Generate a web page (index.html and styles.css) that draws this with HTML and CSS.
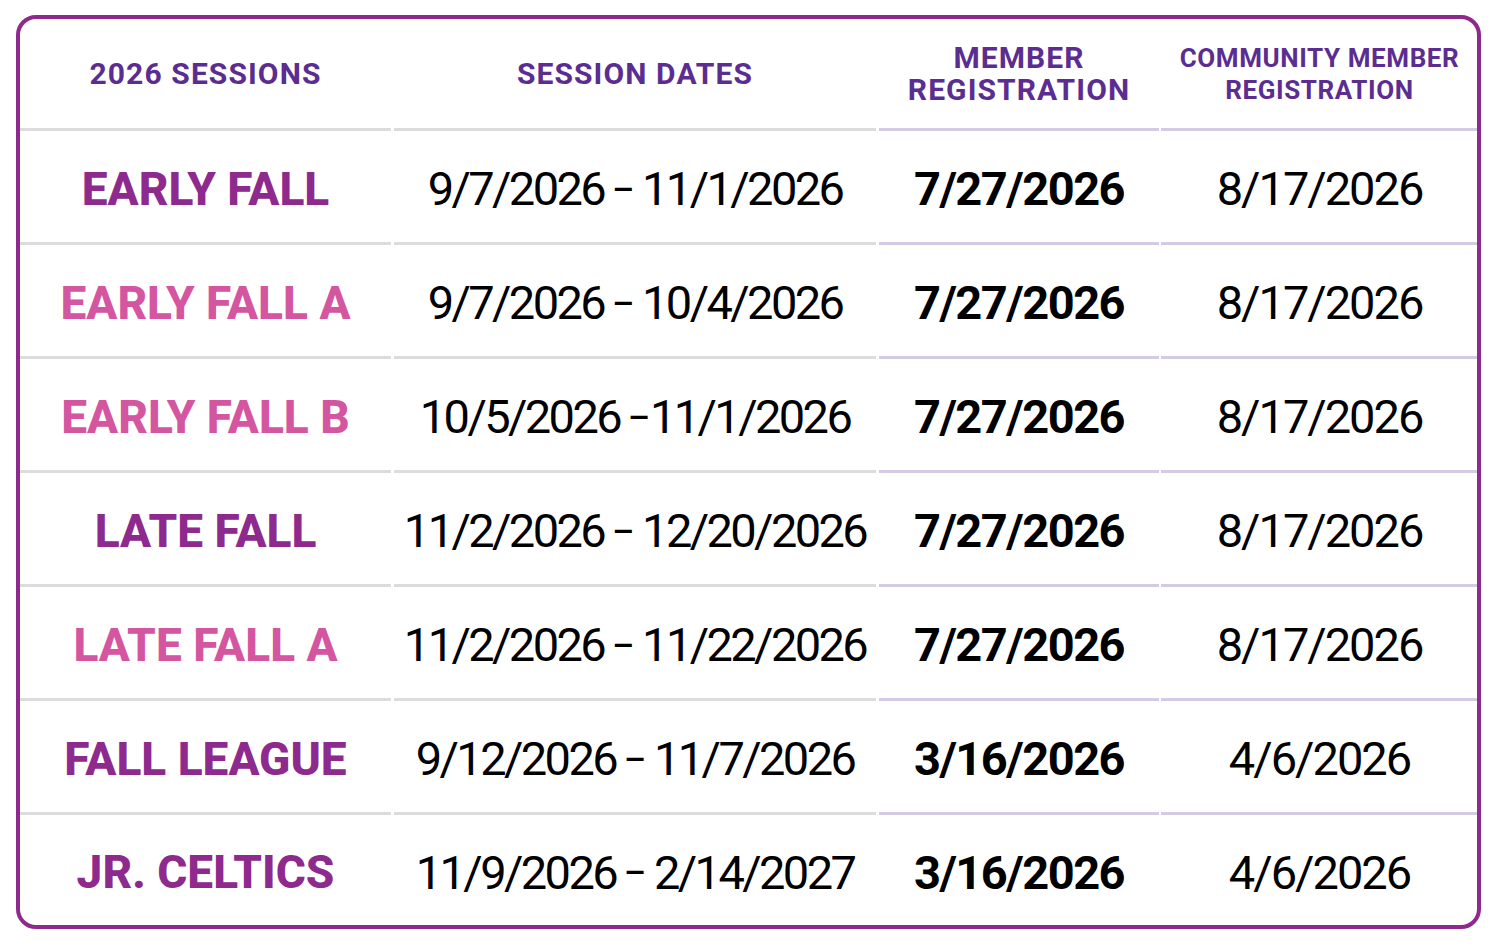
FILE: index.html
```html
<!DOCTYPE html>
<html lang="en">
<head>
<meta charset="utf-8">
<title>2026 Sessions</title>
<link rel="stylesheet" href="styles.css">
</head>
<body>
<div class="frame">
  <div class="table">
    <div class="cell head c1"><span>2026 SESSIONS</span></div>
    <div class="cell head c2"><span>SESSION DATES</span></div>
    <div class="cell head c3"><span>MEMBER<br>REGISTRATION</span></div>
    <div class="cell head c4 small"><span>COMMUNITY MEMBER<br>REGISTRATION</span></div>

    <div class="cell c1 name purple">EARLY FALL</div>
    <div class="cell c2 dates">9/7/2026 <span class="dash">–</span> 11/1/2026</div>
    <div class="cell c3 member">7/27/2026</div>
    <div class="cell c4 community">8/17/2026</div>

    <div class="cell c1 name pink">EARLY FALL A</div>
    <div class="cell c2 dates">9/7/2026 <span class="dash">–</span> 10/4/2026</div>
    <div class="cell c3 member">7/27/2026</div>
    <div class="cell c4 community">8/17/2026</div>

    <div class="cell c1 name pink">EARLY FALL B</div>
    <div class="cell c2 dates">10/5/2026 <span class="dash">–</span>11/1/2026</div>
    <div class="cell c3 member">7/27/2026</div>
    <div class="cell c4 community">8/17/2026</div>

    <div class="cell c1 name purple">LATE FALL</div>
    <div class="cell c2 dates">11/2/2026 <span class="dash">–</span> 12/20/2026</div>
    <div class="cell c3 member">7/27/2026</div>
    <div class="cell c4 community">8/17/2026</div>

    <div class="cell c1 name pink">LATE FALL A</div>
    <div class="cell c2 dates">11/2/2026 <span class="dash">–</span> 11/22/2026</div>
    <div class="cell c3 member">7/27/2026</div>
    <div class="cell c4 community">8/17/2026</div>

    <div class="cell c1 name purple">FALL LEAGUE</div>
    <div class="cell c2 dates">9/12/2026 <span class="dash">–</span> 11/7/2026</div>
    <div class="cell c3 member">3/16/2026</div>
    <div class="cell c4 community">4/6/2026</div>

    <div class="cell c1 name purple last">JR. CELTICS</div>
    <div class="cell c2 dates last">11/9/2026 <span class="dash">–</span> 2/14/2027</div>
    <div class="cell c3 member last">3/16/2026</div>
    <div class="cell c4 community last">4/6/2026</div>
  </div>
</div>
</body>
</html>
```

FILE: styles.css
```css
html, body {
  margin: 0;
  padding: 0;
  background: #ffffff;
}

body {
  padding: 15px 0 0 16px;
  font-family: Roboto, "Open Sans", "Liberation Sans", sans-serif;
  color: #000;
}

.frame {
  width: 1457px;
  border: 4px solid #8e2a8e;
  border-radius: 20px;
  background: #fff;
  overflow: hidden;
}

.table {
  display: grid;
  grid-template-columns: 371px 482px 279px 317px;
  column-gap: 3px;
  grid-template-rows: 112px repeat(6, 114px) 110px;
}

.cell {
  display: flex;
  align-items: center;
  justify-content: center;
  text-align: center;
  border-bottom: 3px solid #dcdcdc;
  white-space: pre;
}

.cell.c3, .cell.c4 {
  border-bottom-color: #d3cbe4;
}

.cell.c3 {
  margin-right: -1px;
}

.cell.last {
  border-bottom: none;
}

.head {
  color: #5b2d91;
  font-weight: 700;
  font-size: 30px;
  line-height: 32px;
  letter-spacing: 1.1px;
  white-space: nowrap;
}

.head.small {
  font-size: 26px;
  line-height: 32px;
  letter-spacing: 0.6px;
}

.name {
  font-weight: 800;
  font-size: 46px;
  padding-top: 4px;
}

.purple { color: #8e2a8e; }
.pink { color: #d456a0; }

.dates {
  font-weight: 400;
  font-size: 47px;
  letter-spacing: -2.6px;
  word-spacing: -1px;
  padding-top: 4px;
}

.dash {
  font-size: 34px;
  font-weight: 500;
  letter-spacing: 0;
}

.member {
  font-weight: 700;
  font-size: 47px;
  letter-spacing: -1.5px;
  padding-top: 4px;
}

.community {
  font-weight: 400;
  font-size: 47px;
  letter-spacing: -2px;
  padding-top: 4px;
}
```
